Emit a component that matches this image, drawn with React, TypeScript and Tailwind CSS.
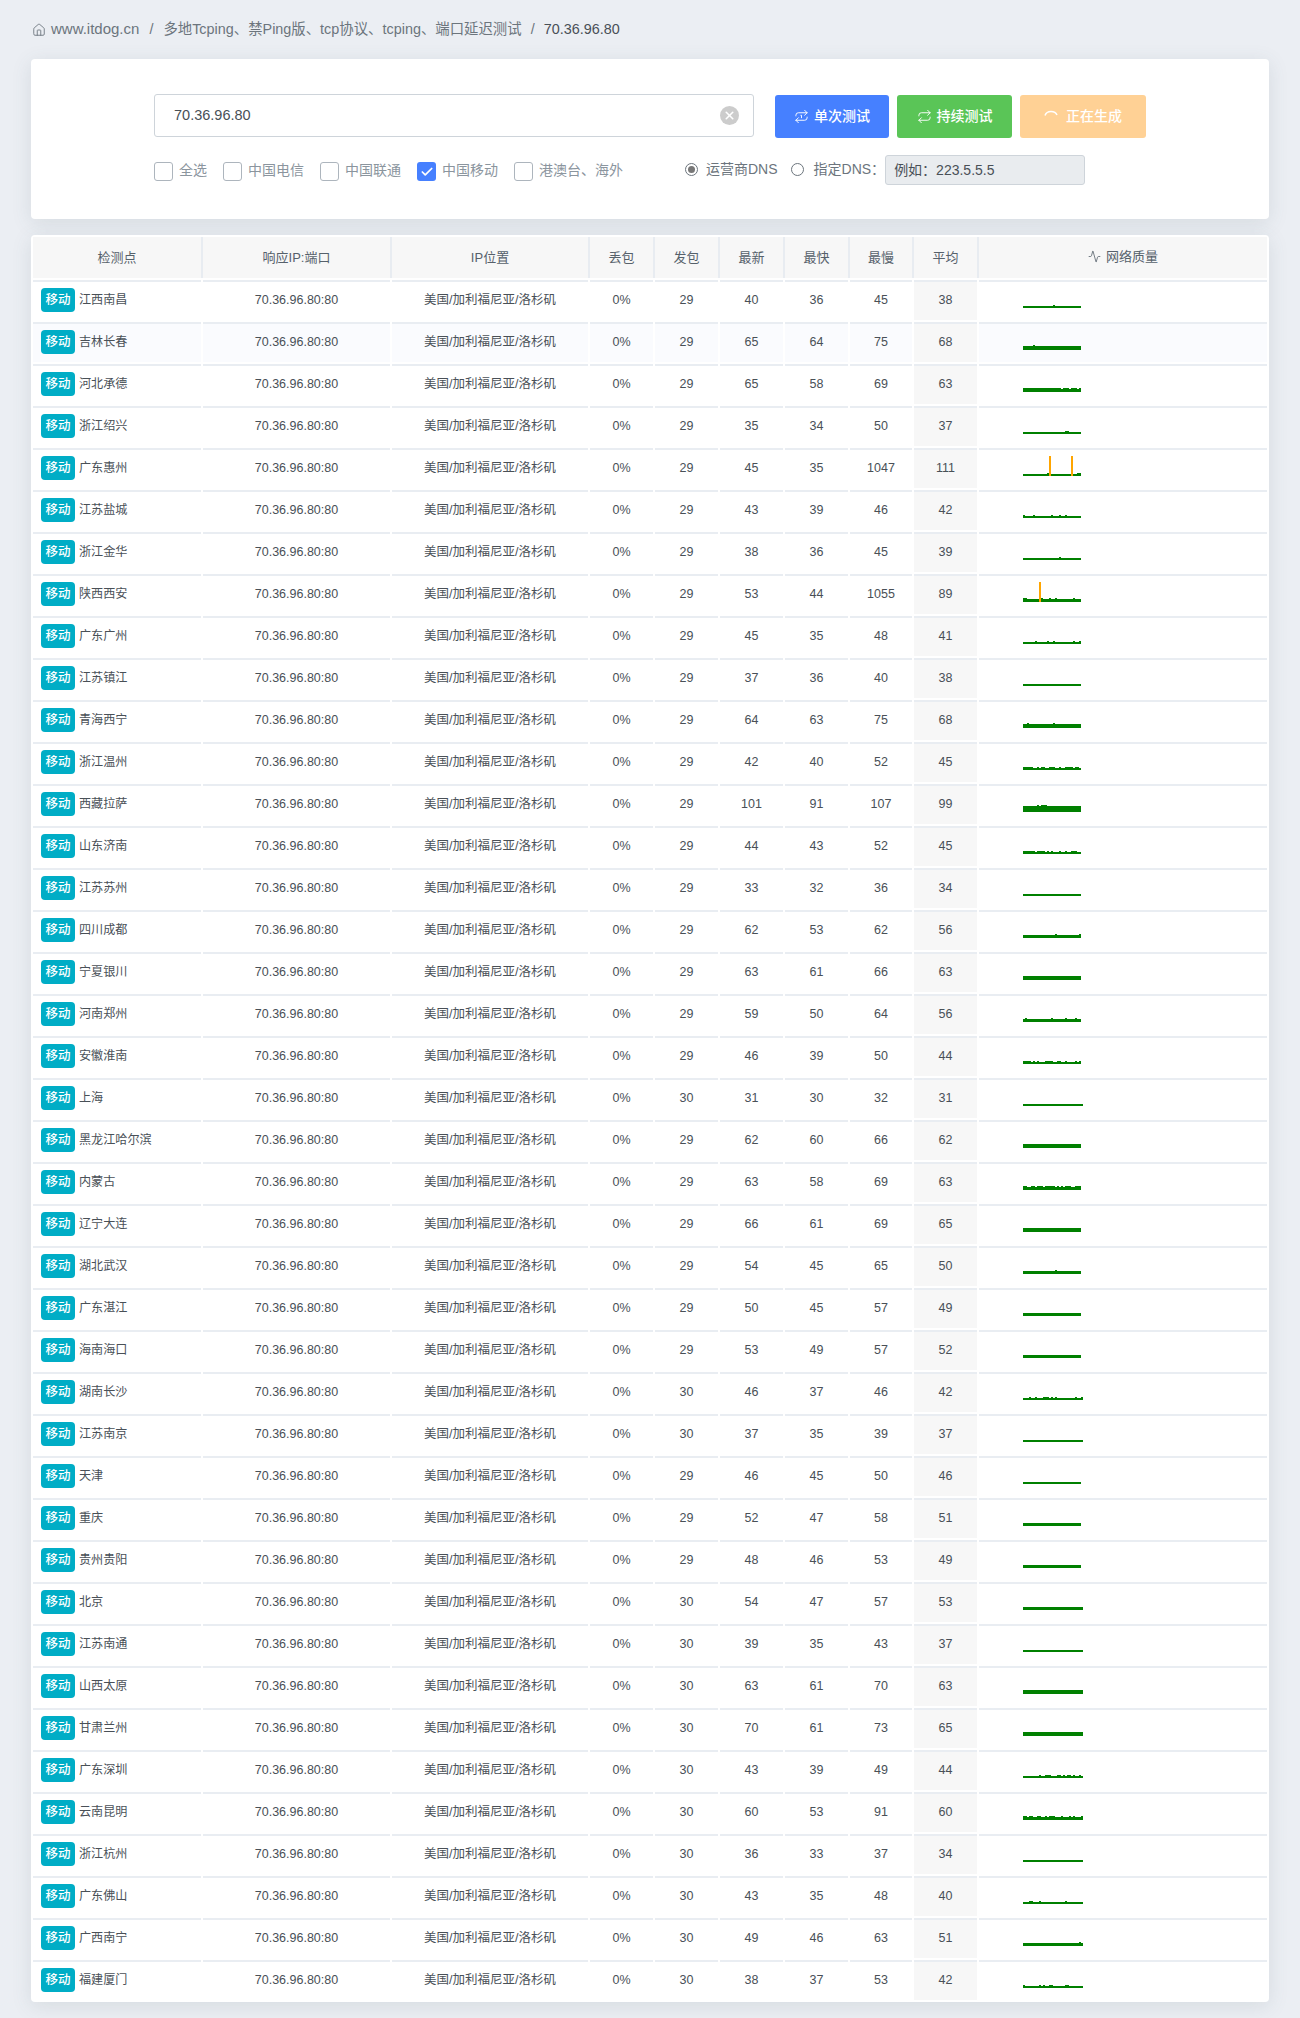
import { Activity, Check, House, Repeat, Repeat1, X } from "lucide-react";

type Row = {
  city: string;
  sent: number;
  latest: number;
  fast: number;
  slow: number;
  avg: number;
  base: number;
  up?: number[];
  peak?: number[];
};

const r = (
  city: string,
  sent: number,
  latest: number,
  fast: number,
  slow: number,
  avg: number,
  base: number,
  up: number[] = [],
  peak: number[] = [],
): Row => ({ city, sent, latest, fast, slow, avg, base, up, peak });

const rows: Row[] = [
  r("江西南昌", 29, 40, 36, 45, 38, 2, [15]),
  r("吉林长春", 29, 65, 64, 75, 68, 4, [5]),
  r("河北承德", 29, 65, 58, 69, 63, 3, [0, 1, 2, 3, 4, 5, 6, 7, 8, 9, 10, 11, 12, 13, 14, 15, 16, 17, 18, 20, 21, 22, 24, 25, 26, 28]),
  r("浙江绍兴", 29, 35, 34, 50, 37, 2, [21, 22]),
  r("广东惠州", 29, 45, 35, 1047, 111, 2, [12, 27, 28], [13, 24]),
  r("江苏盐城", 29, 43, 39, 46, 42, 2, [0, 5, 14, 18, 21]),
  r("浙江金华", 29, 38, 36, 45, 39, 2, [18]),
  r("陕西西安", 29, 53, 44, 1055, 89, 3, [0, 1, 9, 13, 16, 25], [8]),
  r("广东广州", 29, 45, 35, 48, 41, 2, [6, 12, 15, 25, 28]),
  r("江苏镇江", 29, 37, 36, 40, 38, 2),
  r("青海西宁", 29, 64, 63, 75, 68, 4, [2, 15]),
  r("浙江温州", 29, 42, 40, 52, 45, 2, [0, 1, 2, 3, 4, 7, 9, 10, 13, 14, 15, 18, 21, 22, 23, 24, 26, 27]),
  r("西藏拉萨", 29, 101, 91, 107, 99, 6, [7, 9, 10, 11]),
  r("山东济南", 29, 44, 43, 52, 45, 2, [0, 1, 2, 3, 4, 5, 7, 8, 9, 10, 12, 14, 18, 21, 24, 25, 26]),
  r("江苏苏州", 29, 33, 32, 36, 34, 2),
  r("四川成都", 29, 62, 53, 62, 56, 3, [16, 28]),
  r("宁夏银川", 29, 63, 61, 66, 63, 4),
  r("河南郑州", 29, 59, 50, 64, 56, 3, [1, 14, 21, 26]),
  r("安徽淮南", 29, 46, 39, 50, 44, 2, [0, 1, 2, 3, 5, 7, 11, 12, 13, 14, 17, 18, 21, 26, 28]),
  r("上海", 30, 31, 30, 32, 31, 2),
  r("黑龙江哈尔滨", 29, 62, 60, 66, 62, 4),
  r("内蒙古", 29, 63, 58, 69, 63, 3, [0, 1, 4, 5, 7, 8, 9, 11, 12, 13, 14, 15, 17, 19, 21, 22, 23, 26, 27, 28]),
  r("辽宁大连", 29, 66, 61, 69, 65, 4),
  r("湖北武汉", 29, 54, 45, 65, 50, 3, [16]),
  r("广东湛江", 29, 50, 45, 57, 49, 3),
  r("海南海口", 29, 53, 49, 57, 52, 3),
  r("湖南长沙", 30, 46, 37, 46, 42, 2, [3, 6, 10, 11, 12, 14, 16, 26, 29]),
  r("江苏南京", 30, 37, 35, 39, 37, 2),
  r("天津", 29, 46, 45, 50, 46, 2),
  r("重庆", 29, 52, 47, 58, 51, 3),
  r("贵州贵阳", 29, 48, 46, 53, 49, 3),
  r("北京", 30, 54, 47, 57, 53, 3),
  r("江苏南通", 30, 39, 35, 43, 37, 2),
  r("山西太原", 30, 63, 61, 70, 63, 4),
  r("甘肃兰州", 30, 70, 61, 73, 65, 4),
  r("广东深圳", 30, 43, 39, 49, 44, 2, [8, 11, 12, 13, 17, 18, 20, 22, 23, 25, 28]),
  r("云南昆明", 30, 60, 53, 91, 60, 3, [0, 1, 3, 4, 7, 8, 11, 13, 14, 15, 19, 23, 25, 29]),
  r("浙江杭州", 30, 36, 33, 37, 34, 2),
  r("广东佛山", 30, 43, 35, 48, 40, 2, [3, 4, 8, 21]),
  r("广西南宁", 30, 49, 46, 63, 51, 3, [28]),
  r("福建厦门", 30, 38, 37, 53, 42, 2, [0, 8, 10, 13, 14, 21, 22]),
];

const heads = ["丢包", "发包", "最新", "最快", "最慢", "平均"];
const th = "h-[41px] bg-[#f7f7f7] pt-px text-[13px] font-normal text-[#56616b] shadow-[2px_0_0_#e8ecf1]";

function Spark({ row }: { row: Row }) {
  return (
    <div className="flex h-5 items-end">
      {Array.from({ length: row.sent }, (_, i) => {
        const isPeak = row.peak?.includes(i);
        const height = isPeak ? 20 : row.base + (row.up?.includes(i) ? 1 : 0);
        return (
          <div
            key={i}
            className={isPeak ? "w-[2px] bg-[#ffa500]" : "w-[2px] bg-[#008000]"}
            style={{ height }}
          />
        );
      })}
    </div>
  );
}

function Box({ label, checked }: { label: string; checked?: boolean }) {
  return (
    <div className="flex items-center gap-[6px]">
      {checked ? (
        <div className="flex h-[19px] w-[19px] items-center justify-center rounded-[3px] bg-[#4680ff] text-white">
          <Check size={14} strokeWidth={3} />
        </div>
      ) : (
        <div className="h-[19px] w-[19px] rounded-[3px] border border-[#adb5bd] bg-white" />
      )}
      <span className="pb-[3px] text-[14px] text-[#8b959e]">{label}</span>
    </div>
  );
}

function Radio({ checked }: { checked?: boolean }) {
  return (
    <div className="flex h-[13px] w-[13px] items-center justify-center rounded-full border border-[#6c757d]">
      {checked && <div className="h-[7px] w-[7px] rounded-full bg-[#777]" />}
    </div>
  );
}

export default function App() {
  const td = "h-[40px] border-t-2 border-[#e9edf2] pb-[2px] text-center";
  return (
    <div className="min-h-[2018px] bg-[#ebeef3] px-[31px] pb-[16px] font-['Liberation_Sans','Noto_Sans_CJK_SC',sans-serif] text-[#495057]">
      <div className="flex h-[59px] items-center pl-px text-[14.4px] text-[#6c757d]">
        <House size={14} strokeWidth={1.5} />
        <span className="ml-[5px] text-[15px]">www.itdog.cn</span>
        <span className="mx-[10px]">/</span>
        <span>多地Tcping、禁Ping版、tcp协议、tcping、端口延迟测试</span>
        <span className="mx-[9px]">/</span>
        <span className="text-[#495057]">70.36.96.80</span>
      </div>

      <div className="h-[160px] rounded-[4px] bg-white pl-[123px] pt-[35px] shadow-[0_4px_20px_rgba(69,90,100,0.13)]">
        <div className="flex items-start">
          <div className="flex h-[43px] w-[600px] items-center justify-between rounded-[3px] border border-[#ced4da] pl-[19px] pr-[14px] text-[14.5px]">
            <span className="pt-px">70.36.96.80</span>
            <div className="flex h-[19px] w-[19px] items-center justify-center rounded-full bg-[#cccccc] text-white">
              <X size={13} strokeWidth={3} />
            </div>
          </div>
          <button className="ml-[21px] mt-px flex h-[43px] w-[114px] items-center justify-center gap-[5px] rounded-[3px] bg-[#4680ff] pb-px text-[14px] font-medium text-white">
            <Repeat1 size={15} strokeWidth={1.5} />
            单次测试
          </button>
          <button className="ml-[8px] mt-px flex h-[43px] w-[115px] items-center justify-center gap-[5px] rounded-[3px] bg-[#5ac557] pb-px text-[14px] font-medium text-white">
            <Repeat size={15} strokeWidth={1.5} />
            持续测试
          </button>
          <button className="ml-[8px] mt-px flex h-[43px] w-[126px] items-center justify-center gap-[8px] rounded-[3px] bg-[#ffd195] pb-px text-[14px] font-medium text-white">
            <svg width="14" height="14" viewBox="0 0 14 14" fill="none" stroke="currentColor" strokeWidth="1.5">
              <path d="M1 6.5C2 3.5 4.5 2.5 7 2.5S12 3.5 13 6" />
            </svg>
            正在生成
          </button>
        </div>
        <div className="mt-[17px] flex h-[30px] items-center">
          <div className="mt-[3px] flex items-center gap-4">
            <Box label="全选" />
            <Box label="中国电信" />
            <Box label="中国联通" />
            <Box label="中国移动" checked />
            <Box label="港澳台、海外" />
          </div>
          <div className="mb-[2px] ml-[62px] flex items-center text-[14px] text-[#6c757d]">
            <Radio checked />
            <span className="ml-[8px]">运营商DNS</span>
            <div className="ml-[13px]">
              <Radio />
            </div>
            <span className="ml-[10px]">指定DNS：</span>
          </div>
          <div className="flex h-[30px] w-[200px] items-center rounded-[3px] border border-[#ced4da] bg-[#e9ecef] pl-[8px] text-[14px] text-[#495057]">
            例如：223.5.5.5
          </div>
        </div>
      </div>

      <div className="mt-[16px] rounded-[4px] bg-white shadow-[0_4px_20px_rgba(69,90,100,0.13)]">
        <table className="w-full table-fixed border-separate border-spacing-[2px] text-[12.5px]">
          <colgroup>
            <col className="w-[168px]" />
            <col className="w-[187px]" />
            <col className="w-[196px]" />
            <col className="w-[63px]" />
            <col className="w-[63px]" />
            <col className="w-[63px]" />
            <col className="w-[63px]" />
            <col className="w-[62px]" />
            <col className="w-[63px]" />
            <col className="w-[288px]" />
          </colgroup>
          <thead>
            <tr>
              <th className={th}>检测点</th>
              <th className={th}>响应IP:端口</th>
              <th className={th}>IP位置</th>
              {heads.map((h) => (
                <th key={h} className={th}>
                  {h}
                </th>
              ))}
              <th className="h-[41px] bg-[#f7f7f7] pt-px text-[13px] font-normal text-[#56616b]">
                <span className="inline-flex items-center gap-[5px]">
                  <Activity size={13} strokeWidth={1.5} />
                  网络质量
                </span>
              </th>
            </tr>
          </thead>
          <tbody>
            {rows.map((row, i) => {
              const bg = i === 1 ? "bg-[#fafbfe]" : "";
              return (
                <tr key={row.city}>
                  <td className={`${td} ${bg} pl-[8px]`}>
                    <div className="flex items-center gap-[4px]">
                      <span className="flex h-[24px] w-[34px] items-center justify-center rounded-[4px] bg-[#00adc6] font-medium text-white">
                        移动
                      </span>
                      <span className="text-[12.1px]">{row.city}</span>
                    </div>
                  </td>
                  <td className={`${td} ${bg}`}>70.36.96.80:80</td>
                  <td className={`${td} ${bg}`}>美国/加利福尼亚/洛杉矶</td>
                  <td className={`${td} ${bg}`}>0%</td>
                  <td className={`${td} ${bg}`}>{row.sent}</td>
                  <td className={`${td} ${bg}`}>{row.latest}</td>
                  <td className={`${td} ${bg}`}>{row.fast}</td>
                  <td className={`${td} ${bg}`}>{row.slow}</td>
                  <td className={`${td} bg-[#f7f7f7]`}>{row.avg}</td>
                  <td className={`h-[40px] border-t-2 border-[#e9edf2] ${bg} pl-[44px] pt-[6px] align-top`}>
                    <Spark row={row} />
                  </td>
                </tr>
              );
            })}
          </tbody>
        </table>
      </div>
    </div>
  );
}
